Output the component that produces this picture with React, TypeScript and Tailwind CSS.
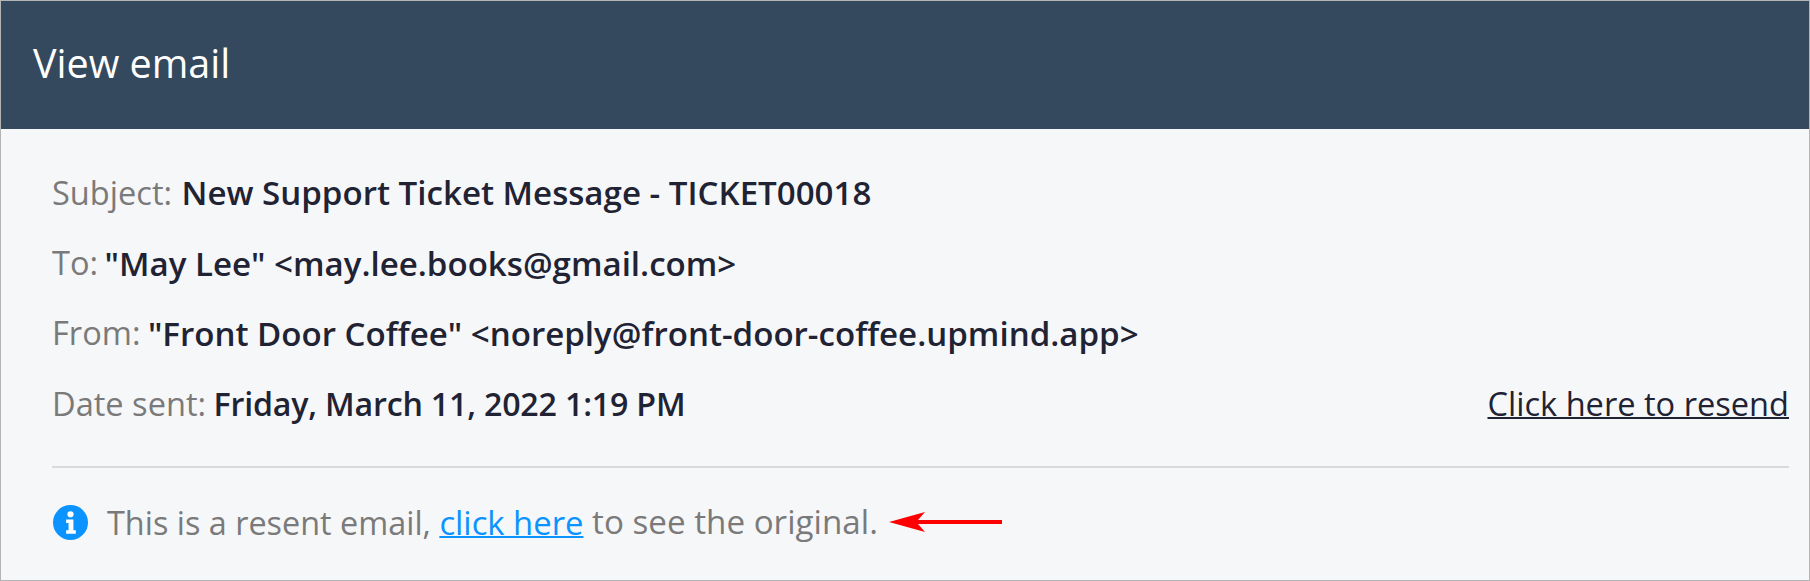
function Row({ label, value, children, valueClass }: { label: string; value: string; children?: React.ReactNode; valueClass: string }) {
  return (
    <div className="h-[70.3px] flex items-center">
      <span className="text-[#7a7a7a]">{label}&nbsp;</span>
      <span className={valueClass}>{value}</span>
      {children}
    </div>
  );
}

export default function App() {
  return (
    <div className="w-[1810px] h-[581px] bg-[#f6f7f9] border border-[#b4b4b4] overflow-hidden font-['Open_Sans',sans-serif] text-[32.6px]">
      <div className="h-[128px] bg-[#34495e] flex items-center pl-[32px] pb-[2px] text-white text-[39.5px]">View email</div>
      <div className="pl-[51px] pr-[20px] pt-[29px]">
        <Row label="Subject:" value="New Support Ticket Message - TICKET00018" valueClass="ml-[1px] font-semibold text-[#1f2333] text-[33.1px]" />
        <Row label="To:" value={'"May Lee" <may.lee.books@gmail.com>'} valueClass="-ml-[2px] font-semibold text-[#1f2333] text-[33.1px]" />
        <Row label="From:" value={'"Front Door Coffee" <noreply@front-door-coffee.upmind.app>'} valueClass="-ml-[1px] font-semibold text-[#1f2333] text-[33.1px]" />
        <Row label="Date sent:" value="Friday, March 11, 2022 1:19 PM" valueClass="-ml-[1px] font-semibold text-[#1f2333] text-[32.2px] tracking-[-0.2px]">
          <a className="ml-auto underline decoration-2 text-[#1f2333]">Click here to resend</a>
        </Row>
        <div className="border-t-2 border-[#d9dadd] mt-[27px] h-[110px] flex items-center text-[#7a7a7a] text-[32.8px]">
          <svg width="35" height="35" viewBox="0 0 36 36" className="ml-[1px] mr-[19px] shrink-0">
            <circle cx="18" cy="18" r="18" fill="#0b93ff" />
            <circle cx="18" cy="9.5" r="3.2" fill="#fff" />
            <path d="M13.5 15h7.5v11h2.5v3.5h-10V26h2.5v-7.5h-2.5z" fill="#fff" />
          </svg>
          <span className="text-[32.4px]">This is a resent email,&nbsp;</span>
          <a className="underline decoration-2 text-[#0b93ff]">click here</a>
          <span className="text-[33.2px]">&nbsp;to see the original.</span>
          <svg width="114" height="20" viewBox="0 0 114 20" className="ml-[11px] shrink-0">
            <path d="M0 10 L36 0 L29 8 H113 V12 H29 L36 20 Z" fill="#f00" />
          </svg>
        </div>
      </div>
    </div>
  );
}
